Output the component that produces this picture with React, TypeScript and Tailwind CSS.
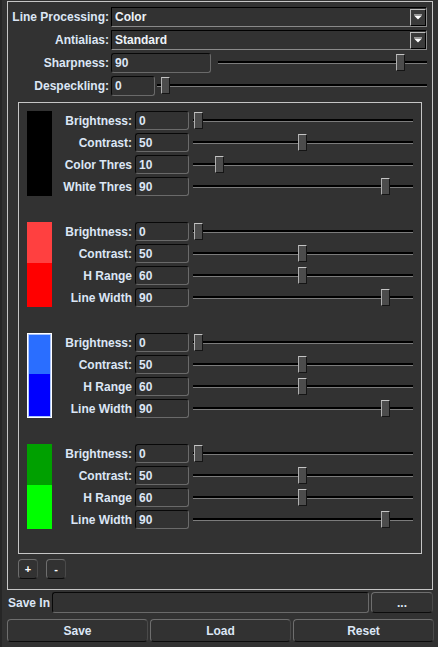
import React from "react";

type SliderRow = { label: string; value: string; thumb: number };

const groups: { top: string; bottom: string; selected?: boolean; rows: SliderRow[] }[] = [
  {
    top: "bg-black",
    bottom: "bg-black",
    rows: [
      { label: "Brightness:", value: "0", thumb: 1 },
      { label: "Contrast:", value: "50", thumb: 105 },
      { label: "Color Thres", value: "10", thumb: 22 },
      { label: "White Thres", value: "90", thumb: 188 },
    ],
  },
  {
    top: "bg-[#ff4040]",
    bottom: "bg-[#ff0000]",
    rows: [
      { label: "Brightness:", value: "0", thumb: 1 },
      { label: "Contrast:", value: "50", thumb: 105 },
      { label: "H Range", value: "60", thumb: 105 },
      { label: "Line Width", value: "90", thumb: 188 },
    ],
  },
  {
    top: "bg-[#2a6eff]",
    bottom: "bg-[#0000ff]",
    selected: true,
    rows: [
      { label: "Brightness:", value: "0", thumb: 1 },
      { label: "Contrast:", value: "50", thumb: 105 },
      { label: "H Range", value: "60", thumb: 105 },
      { label: "Line Width", value: "90", thumb: 188 },
    ],
  },
  {
    top: "bg-[#00a000]",
    bottom: "bg-[#00ff00]",
    rows: [
      { label: "Brightness:", value: "0", thumb: 1 },
      { label: "Contrast:", value: "50", thumb: 105 },
      { label: "H Range", value: "60", thumb: 105 },
      { label: "Line Width", value: "90", thumb: 188 },
    ],
  },
];

const Field = ({ value, className }: { value: string; className: string }) => (
  <div
    className={`h-full flex items-center pl-[3px] rounded-[3px] border border-t-[#080808] border-l-[#080808] border-b-[#6a6a6a] border-r-[#6a6a6a] ${className}`}
  >
    {value}
  </div>
);

const Slider = ({ thumb, className }: { thumb: number; className: string }) => (
  <div className={`relative h-full ${className}`}>
    <div className="absolute left-0 right-0 top-[8px] h-[3px] border-t-2 border-t-black bg-[#7c7c7c]" />
    <div
      className="absolute top-[1px] w-[9px] h-[17px] bg-[#4c4c4c] border border-t-[#c4c4c4] border-l-[#b0b0b0] border-r-[#151515] border-b-[#151515]"
      style={{ left: thumb }}
    />
  </div>
);

const Combo = ({ value }: { value: string }) => (
  <div className="ml-[2px] w-[316px] h-full flex items-center border border-t-black border-l-black border-b-[#8a8a8a] border-r-[#8a8a8a] text-[#eef2f8]">
    <span className="pl-[3px]">{value}</span>
    <div className="ml-auto w-[16px] h-[17px] flex items-center justify-center bg-[#3a3a3a] border border-t-[#bdbdbd] border-l-[#bdbdbd] border-r-black border-b-black">
      <svg width="8" height="6" viewBox="0 0 8 6">
        <rect x="0" y="0" width="8" height="1" fill="#9a9a9a" />
        <path d="M0 1.5 H8 L4 5.5 Z" fill="#ffffff" />
      </svg>
    </div>
  </div>
);

const Button = ({ label, className }: { label: string; className: string }) => (
  <div
    className={`flex items-center justify-center rounded-[4px] border border-t-[#6e6e6e] border-l-[#6e6e6e] border-r-[#4a4a4a] border-b-[#0c0c0c] ${className}`}
  >
    {label}
  </div>
);

export default function App() {
  return (
    <div className="w-[438px] h-[647px] overflow-hidden bg-[#323232] border-l-2 border-l-[#262626] font-['Liberation_Sans',Arial,sans-serif] font-bold text-[12px] text-[#dce6f5] leading-none">
      <div className="ml-[5px] mt-[1px] w-[426px] h-[589px] border border-[#c6c6c6] pt-[5px] flex flex-col">
        <div className="flex flex-col gap-[3px]">
          <div className="flex items-center h-[20px]">
            <div className="w-[101px] text-right">Line Processing:</div>
            <Combo value="Color" />
          </div>
          <div className="flex items-center h-[20px]">
            <div className="w-[101px] text-right">Antialias:</div>
            <Combo value="Standard" />
          </div>
          <div className="flex items-center h-[20px]">
            <div className="w-[101px] text-right">Sharpness:</div>
            <Field value="90" className="ml-[2px] w-[100px]" />
            <Slider thumb={178} className="ml-[7px] w-[209px]" />
          </div>
          <div className="flex items-center h-[20px]">
            <div className="w-[101px] text-right">Despeckling:</div>
            <Field value="0" className="ml-[2px] w-[44px]" />
            <Slider thumb={4} className="ml-[2px] w-[270px]" />
          </div>
        </div>

        <div className="mt-[6px] ml-[10px] w-[404px] border border-[#c6c6c6] pt-[8px] pl-[8px] pb-[24px] flex flex-col gap-[26px]">
          {groups.map((g, i) => (
            <div key={i} className="flex">
              {g.selected ? (
                <div className="w-[25px] h-[85px] border border-white">
                  <div className="w-full h-full border border-[#a8c4ff] flex flex-col">
                    <div className={`h-[39px] ${g.top}`} />
                    <div className={`flex-1 ${g.bottom}`} />
                  </div>
                </div>
              ) : (
                <div className="w-[25px] h-[85px] flex flex-col">
                  <div className={`h-[41px] ${g.top}`} />
                  <div className={`flex-1 ${g.bottom}`} />
                </div>
              )}
              <div className="flex flex-col gap-[3px]">
                {g.rows.map((r) => (
                  <div key={r.label} className="flex items-center h-[19px]">
                    <div className="w-[80px] text-right">{r.label}</div>
                    <Field value={r.value} className="ml-[3px] w-[54px]" />
                    <Slider thumb={r.thumb} className="ml-[4px] w-[220px]" />
                  </div>
                ))}
              </div>
            </div>
          ))}
        </div>

        <div className="mt-[5px] ml-[10px] flex gap-[8px]">
          <Button label="+" className="w-[20px] h-[20px] text-[11px] text-white" />
          <Button label="-" className="w-[20px] h-[20px] text-[11px] text-white" />
        </div>
      </div>

      <div className="mt-[2px] flex items-center h-[21px]">
        <div className="ml-[6px] w-[44px]">Save In</div>
        <Field value="" className="ml-[0px] w-[317px] h-[20px]" />
        <Button label="..." className="ml-[2px] w-[62px] h-[21px]" />
      </div>

      <div className="mt-[6px] ml-[5px] flex gap-[2px]">
        <Button label="Save" className="w-[141px] h-[23px]" />
        <Button label="Load" className="w-[141px] h-[23px]" />
        <Button label="Reset" className="w-[141px] h-[23px]" />
      </div>
    </div>
  );
}
